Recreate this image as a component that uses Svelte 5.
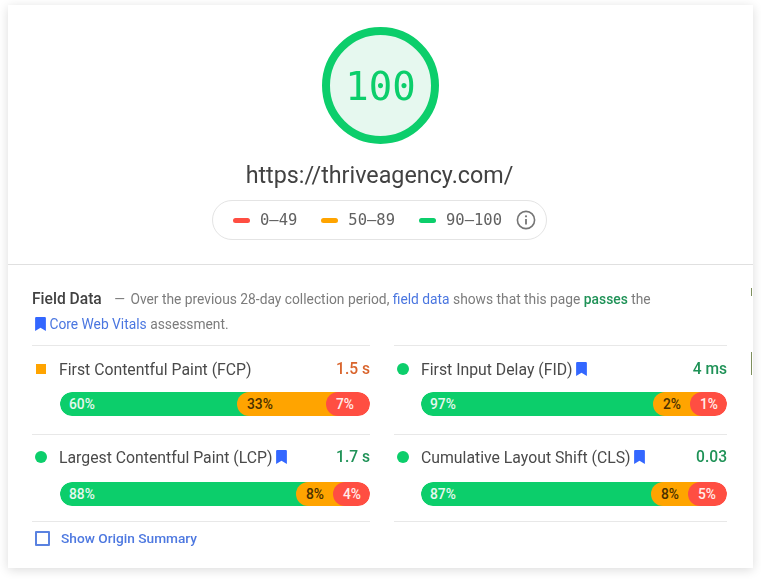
<script>
  const metrics = [
    { name: 'First Contentful Paint (FCP)', value: '1.5 s', status: 'average', bookmark: false, good: 60, ok: 33, poor: 7, okWidth: 89, poorWidth: 44 },
    { name: 'First Input Delay (FID)', value: '4 ms', status: 'pass', bookmark: true, good: 97, ok: 2, poor: 1, okWidth: 37, poorWidth: 37 },
    { name: 'Largest Contentful Paint (LCP)', value: '1.7 s', status: 'pass', bookmark: true, good: 88, ok: 8, poor: 4, okWidth: 37, poorWidth: 37 },
    { name: 'Cumulative Layout Shift (CLS)', value: '0.03', status: 'pass', bookmark: true, good: 87, ok: 8, poor: 5, okWidth: 37, poorWidth: 39 },
  ];
</script>

{#snippet bookmark()}
  <svg class="bookmark" width="11" height="14" viewBox="0 0 10 13">
    <path d="M1 0h8a1 1 0 0 1 1 1v12l-5-3-5 3V1a1 1 0 0 1 1-1z" fill="currentColor" />
  </svg>
{/snippet}

<div class="page">
  <div class="card">
    <section class="summary">
      <div class="gauge">100</div>
      <div class="url">https://thriveagency.com/</div>
      <div class="legend">
        <span class="range"><i class="dash red"></i>0–49</span>
        <span class="range"><i class="dash orange"></i>50–89</span>
        <span class="range"><i class="dash green"></i>90–100</span>
        <svg class="info" width="20" height="20" viewBox="0 0 20 20">
          <circle cx="10" cy="10" r="8.6" fill="none" stroke="#757575" stroke-width="1.6" />
          <path d="M10 9v5.5" stroke="#757575" stroke-width="1.8" fill="none" />
          <circle cx="10" cy="6.3" r="1.1" fill="#757575" />
        </svg>
      </div>
    </section>

    <section class="field">
      <p class="intro">
        <strong class="title">Field Data</strong>
        <span class="dash-text">—</span>
        Over the previous 28-day collection period, <span class="link">field data</span> shows that this page <b class="passes">passes</b> the
      </p>
      <p class="intro second">
        <span class="link">{@render bookmark()} Core Web Vitals</span> assessment.
      </p>

      <div class="metrics">
        {#each metrics as m}
          <div class="metric">
            <div class="head">
              <i class="marker {m.status}"></i>
              <span class="name">{m.name}</span>
              {#if m.bookmark}{@render bookmark()}{/if}
              <span class="value {m.status}">{m.value}</span>
            </div>
            <div class="bar">
              <div class="seg good">{m.good}%</div>
              <div class="seg ok" style="width: {m.okWidth + 12}px">{m.ok}%</div>
              <div class="seg poor" style="width: {m.poorWidth}px">{m.poor}%</div>
            </div>
          </div>
        {/each}
      </div>

      <label class="origin">
        <span class="box"></span>
        Show Origin Summary
      </label>
    </section>

    <i class="sliver one"></i>
    <i class="sliver two"></i>
  </div>
</div>

<style>
  :global(body) {
    background: #fff;
    font-family: Roboto, "Liberation Sans", sans-serif;
  }

  .page {
    height: 579px;
    box-sizing: border-box;
    padding: 5px 8px 11px;
  }

  .card {
    position: relative;
    width: 745px;
    height: 563px;
    box-sizing: border-box;
    background: #fff;
    box-shadow: 0 2px 10px rgba(0, 0, 0, 0.14);
    filter: blur(0.45px);
  }

  .sliver {
    position: absolute;
    right: 1px;
    width: 1px;
    background: #7d8f5c;
  }

  .sliver.one {
    top: 283px;
    height: 8px;
  }

  .sliver.two {
    top: 347px;
    height: 23px;
  }

  .summary {
    height: 260px;
    box-sizing: border-box;
    border-bottom: 1px solid #e0e0e0;
    padding-top: 22px;
    display: flex;
    flex-direction: column;
    align-items: center;
  }

  .gauge {
    width: 117px;
    height: 117px;
    box-sizing: border-box;
    border: 8px solid #0cce6b;
    border-radius: 50%;
    background: #e6f8ef;
    color: #0cce6b;
    font: 39px/103px "DejaVu Sans Mono", monospace;
    text-align: center;
  }

  .url {
    margin: 15px 2px 0 0;
    font-size: 23.3px;
    line-height: 32px;
    color: #424242;
  }

  .legend {
    margin: 9px 2px 0 0;
    width: 335px;
    height: 40px;
    box-sizing: border-box;
    border: 1px solid #e4e4e4;
    border-radius: 20px;
    display: flex;
    align-items: center;
    padding-left: 20px;
    font: 15.5px "DejaVu Sans Mono", monospace;
    color: #616161;
  }

  .range {
    display: flex;
    align-items: center;
    gap: 10px;
    margin-right: 24px;
  }

  .dash {
    width: 17px;
    height: 5px;
    border-radius: 3px;
  }

  .red { background: #ff4e42; }
  .orange { background: #ffa400; }
  .green { background: #0cce6b; }

  .info {
    margin-left: -10px;
  }

  .field {
    padding: 25px 26px 0 24px;
  }

  .intro {
    margin: 0;
    font-size: 13.8px;
    line-height: 18px;
    color: #7c7c7c;
  }

  .second {
    margin-top: 7px;
    height: 19px;
  }

  .title {
    font-size: 15.6px;
    font-weight: 500;
    color: #424242;
    margin-right: 9px;
  }

  .dash-text {
    margin-right: 2px;
  }

  .link {
    color: #4a76e0;
  }

  .link .bookmark {
    vertical-align: -2px;
    margin-left: 3px;
  }

  .passes {
    color: #1f9257;
    font-weight: 500;
  }

  .bookmark {
    color: #3367ff;
    flex: none;
  }

  .metrics {
    margin-top: 11px;
    display: grid;
    grid-template-columns: 338px 333px;
    column-gap: 24px;
  }

  .metric {
    height: 89px;
    box-sizing: border-box;
    border-top: 1px solid #e8e8e8;
    padding-top: 13px;
  }

  .metric:nth-child(n + 3) {
    border-bottom: 1px solid #e8e8e8;
    height: 88px;
    padding-top: 12px;
  }

  .metric:nth-child(n + 3) .bar {
    margin-top: 15px;
  }

  .metric:nth-child(even) .bar {
    margin-left: 27px;
  }

  .head {
    height: 20px;
    display: flex;
    align-items: center;
    gap: 3px;
    font-size: 15.8px;
    color: #4a4a4a;
  }

  .marker {
    width: 12px;
    height: 12px;
    margin: 0 9px 0 3px;
    border-radius: 50%;
    background: #0cce6b;
    flex: none;
  }

  .marker.average {
    width: 10px;
    height: 10px;
    margin: 0 10px 0 4px;
    border-radius: 0;
    background: #ffa400;
  }

  .value {
    margin-left: auto;
    font-size: 15.6px;
    font-weight: 500;
  }

  .value.average { color: #d9642c; }
  .value.pass { color: #1f9257; }

  .bar {
    margin: 13px 0 0 28px;
    height: 24px;
    display: flex;
    border-radius: 12px;
    overflow: hidden;
    font-size: 13.8px;
    font-weight: 500;
    line-height: 24px;
  }

  .seg {
    box-sizing: border-box;
    border-radius: 12px;
    flex: none;
    padding-left: 10px;
  }

  .seg.good {
    flex: 1;
    padding-left: 9px;
    background: #0cce6b;
    color: #e6f8ef;
    border-radius: 12px 0 0 12px;
  }

  .seg.ok {
    margin-left: -12px;
    background: #ffa400;
    color: #4a3000;
    border-radius: 12px 0 0 12px;
  }

  .seg.poor {
    margin-left: -12px;
    background: #ff4e42;
    color: #ffecea;
  }

  .origin {
    margin-top: 8px;
    display: flex;
    align-items: center;
    gap: 11px;
    padding-left: 3px;
    font-size: 13.7px;
    font-weight: 500;
    color: #4d78e0;
  }

  .box {
    width: 11px;
    height: 11px;
    border: 2px solid #5a82e0;
    border-radius: 1px;
    flex: none;
  }
</style>
